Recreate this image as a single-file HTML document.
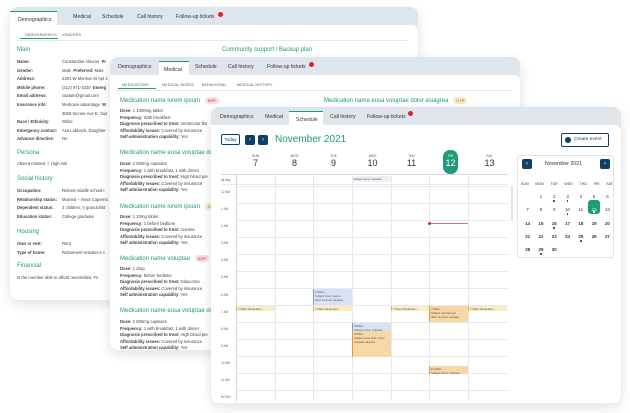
<!DOCTYPE html>
<html><head><meta charset="utf-8"><style>
*{margin:0;padding:0;box-sizing:border-box}
body{width:630px;height:413px;background:#fff;position:relative;overflow:hidden;font-family:"Liberation Sans",sans-serif;color:#333}
.a{position:absolute;white-space:nowrap}
.win{position:absolute;background:#dfe5ec;border-radius:8px;box-shadow:0 4px 12px rgba(0,0,0,.12)}
.body{position:absolute;background:#fff;border-radius:0 6px 0 0}
.tab{position:absolute;font-size:5.2px;color:#333;top:7px}
.act{background:#fff;border-top:1.5px solid #1c9a7a;height:14px;top:4px!important;padding-top:5px}
.badge{position:absolute;width:5px;height:5px;border-radius:50%;background:#d9232d}
.sub{font-size:3.6px;color:#555;letter-spacing:.2px}
.h{color:#1f9a7a;font-size:6px}
.s{font-size:4.2px;color:#444}
.b{font-weight:bold}
.tag{display:inline-block;font-size:4px;padding:1px 3px;border-radius:4px;margin-left:5px;vertical-align:middle}
.bsp{background:#f9dbe0;color:#c03a4a}
.ctp{background:#f7ebc4;color:#8b6b10}
.vl{position:absolute;width:1px;background:#e6e9ee}
.hl{position:absolute;height:1px;background:#e6e9ee}
.hr{font-size:3.2px;color:#666}
.ev{position:absolute;font-size:2.8px;color:#555;padding:1px;border-left:1px solid}
.y{background:#fbecc6;border-color:#e6b24a}
.o{background:#f7d7a6;border-color:#e39a3a}
.bl{background:#d9e2f2;border-color:#7f97c4}
.nav{position:absolute;width:10px;height:10px;background:#0f3f63;border-radius:2px;color:#fff;font-size:6px;text-align:center;line-height:10px}
.dot{position:absolute;width:1.5px;height:1.5px;border-radius:50%;background:#0f3f63}
</style></head><body>

<!-- Window 1 -->
<div class="win" style="left:10px;top:7px;width:408px;height:293px">
 <div class="tab act" style="left:0;padding-left:8px;width:47px;border-radius:0">Demographics</div>
 <div class="tab" style="left:63px">Medical</div>
 <div class="tab" style="left:92px">Schedule</div>
 <div class="tab" style="left:127px">Call history</div>
 <div class="tab" style="left:166px">Follow-up tickets</div>
 <div class="badge" style="left:208px;top:5px"></div>
 <div class="body" style="left:0;top:18px;width:408px;height:275px;border-radius:0 6px 8px 8px"></div>
</div>
<div class="a sub" style="left:25px;top:33px">DEMOGRAPHICS</div>
<div class="a" style="left:20px;top:38px;width:38px;height:1px;background:#1f9a7a"></div>
<div class="a sub" style="left:62px;top:33px">VENDORS</div>
<div class="a" style="left:17px;top:40px;width:390px;height:1px;background:#e6e9ee"></div>
<div class="a h" style="left:17px;top:47px">Main</div>
<div class="a h" style="left:222px;top:47px">Community support / Backup plan</div>
<div class="a s b" style="left:17px;top:58px;line-height:8.6px">Name:<br>Gender:<br>Address:<br>Mobile phone:<br>Email address:<br>Insurance info:<br><br>Race / Ethnicity:<br>Emergency contact:<br>Advance directive:</div>
<div class="a s" style="left:62px;top:58px;line-height:8.6px">Constantine Alavros &nbsp;<b>Pr</b><br>Male &nbsp;<b>Preferred:</b> Male<br>2301 W Monroe St Apt 1<br>(312) 671-3330 &nbsp;<b>Emerg</b><br>caalam@gmail.com<br>Medicare advantage &nbsp;<b>M</b><br>3829 Secure Ave E, Suit<br>White<br>Ava Lubbock, Daughter<br>No</div>
<div class="a h" style="left:17px;top:150px">Persona</div>
<div class="a s" style="left:17px;top:161px">Absent-minded &nbsp;|&nbsp; High risk</div>
<div class="a h" style="left:17px;top:176px">Social history</div>
<div class="a s b" style="left:17px;top:187px;line-height:8.7px">Occupation:<br>Relationship status:<br>Dependent status:<br>Education status:</div>
<div class="a s" style="left:62px;top:187px;line-height:8.7px">Retired middle school t<br>Married – Nova Capernic<br>2 children, 4 grandchild<br>College graduate</div>
<div class="a h" style="left:17px;top:229px">Housing</div>
<div class="a s b" style="left:17px;top:240px;line-height:8.7px">Own or rent:<br>Type of home:</div>
<div class="a s" style="left:62px;top:240px;line-height:8.7px">Rent<br>Retirement residence c</div>
<div class="a h" style="left:17px;top:263px">Financial</div>
<div class="a s" style="left:17px;top:275px">Is the member able to afford necessities: Fo</div>

<!-- Window 2 -->
<div class="win" style="left:110px;top:57px;width:410px;height:293px">
 <div class="tab" style="left:8px">Demographics</div>
 <div class="tab act" style="left:49px;width:30px;padding-left:5px">Medical</div>
 <div class="tab" style="left:85px">Schedule</div>
 <div class="tab" style="left:118px">Call history</div>
 <div class="tab" style="left:157px">Follow-up tickets</div>
 <div class="badge" style="left:199px;top:5px"></div>
 <div class="body" style="left:0;top:18px;width:410px;height:275px;border-radius:0 6px 8px 8px"></div>
</div>
<div class="a sub" style="left:122px;top:83px">MEDICATIONS</div>
<div class="a" style="left:118px;top:88px;width:38px;height:1px;background:#1f9a7a"></div>
<div class="a sub" style="left:162px;top:83px">MEDICAL NEEDS</div>
<div class="a sub" style="left:202px;top:83px">BEHAVIORAL</div>
<div class="a sub" style="left:237px;top:83px">MEDICAL HISTORY</div>
<div class="a" style="left:117px;top:90px;width:395px;height:1px;background:#e6e9ee"></div>
<div class="a h" style="left:120px;top:97px">Medication name lorem ipsum<span class="tag bsp">BSP</span></div>
<div class="a h" style="left:324px;top:97px">Medication name eusa voluptae dolor asiagrea<span class="tag ctp">CTP</span></div>
<div class="a s" style="left:120px;top:108px;line-height:6.6px"><b>Dose:</b> 1 1000mg tablet<br><b>Frequency:</b> With breakfast<br><b>Diagnosis prescribed to treat:</b> Ventricular fibr<br><b>Affordability issues:</b> Covered by insurance<br><b>Self-administration capability:</b> Yes</div>
<div class="a h" style="left:120px;top:150px">Medication name eusa voluptae do</div>
<div class="a s" style="left:120px;top:161px;line-height:6.6px"><b>Dose:</b> 2 500mg capsules<br><b>Frequency:</b> 1 with breakfast, 1 with dinner<br><b>Diagnosis prescribed to treat:</b> High blood pre<br><b>Affordability issues:</b> Covered by insurance<br><b>Self administration capability:</b> Yes</div>
<div class="a h" style="left:120px;top:203px">Medication name lorem ipsum<span class="tag ctp">CTP</span></div>
<div class="a s" style="left:120px;top:214px;line-height:6.6px"><b>Dose:</b> 1 10mg tablet<br><b>Frequency:</b> 1 before bedtime<br><b>Diagnosis prescribed to treat:</b> Anemia<br><b>Affordability issues:</b> Covered by insurance<br><b>Self administration capability:</b> Yes</div>
<div class="a h" style="left:120px;top:255px">Medication name voluptae<span class="tag bsp">BSP</span></div>
<div class="a s" style="left:120px;top:266px;line-height:6.6px"><b>Dose:</b> 1 drop<br><b>Frequency:</b> before bedtime<br><b>Diagnosis prescribed to treat:</b> Glaucoma<br><b>Affordability issues:</b> Covered by insurance<br><b>Self administration capability:</b> Yes</div>
<div class="a h" style="left:120px;top:308px">Medication name eusa voluptae do</div>
<div class="a s" style="left:120px;top:319px;line-height:6.6px"><b>Dose:</b> 2 500mg capsules<br><b>Frequency:</b> 1 with breakfast, 1 with dinner<br><b>Diagnosis prescribed to treat:</b> High blood pre<br><b>Affordability issues:</b> Covered by insurance<br><b>Self administration capability:</b> Yes</div>

<!-- Window 3 -->
<div class="win" style="left:211px;top:107px;width:410px;height:296px">
 <div class="tab" style="left:9px">Demographics</div>
 <div class="tab" style="left:54px">Medical</div>
 <div class="tab act" style="left:78px;width:34px;padding-left:7px">Schedule</div>
 <div class="tab" style="left:119px">Call history</div>
 <div class="tab" style="left:156px">Follow-up tickets</div>
 <div class="badge" style="left:197px;top:4px"></div>
 <div class="body" style="left:0;top:18px;width:410px;height:278px;border-radius:0 6px 8px 8px"></div>
</div>
<div class="a" style="left:221px;top:134px;width:19px;height:11px;border:1px solid #0f3f63;border-radius:2px;font-size:4.5px;text-align:center;line-height:9px;color:#0f3f63">Today</div>
<div class="nav" style="left:245px;top:135px">‹</div>
<div class="nav" style="left:258px;top:135px">›</div>
<div class="a" style="left:275px;top:134px;font-size:10px;color:#1f9a7a">November 2021</div>
<div class="a" style="left:561px;top:133px;width:48px;height:14px;border:1px solid #0f3f63;border-radius:2px;font-size:4.8px;line-height:12px;color:#0f3f63;padding-left:12px">Create event</div>
<div class="a" style="left:565px;top:137px;width:6px;height:6px;border-radius:50%;background:#0f3f63"></div>

<!-- day headers -->
<div class="a" style="left:236px;top:154px;width:273px;font-size:3.3px;color:#555;display:flex">
 <span style="width:39px;text-align:center">SUN<br><span style="font-size:9px;color:#333">7</span></span>
 <span style="width:39px;text-align:center">MON<br><span style="font-size:9px;color:#333">8</span></span>
 <span style="width:39px;text-align:center">TUE<br><span style="font-size:9px;color:#333">9</span></span>
 <span style="width:39px;text-align:center">WED<br><span style="font-size:9px;color:#333">10</span></span>
 <span style="width:39px;text-align:center">THU<br><span style="font-size:9px;color:#333">11</span></span>
 <span style="width:39px;text-align:center;position:relative"><span style="position:absolute;left:12px;top:-4px;width:15px;height:24px;border-radius:7px;background:#1f9a7a"></span><span style="position:relative;color:#fff">FRI<br><span style="font-size:9px">12</span></span></span>
 <span style="width:39px;text-align:center">SAT<br><span style="font-size:9px;color:#333">13</span></span>
</div>
<div class="hl" style="left:221px;top:174px;width:287px;background:#d5dae1"></div>
<div class="a hr" style="left:221px;top:178px">all-day</div>
<div class="ev" style="left:352px;top:176px;width:39px;height:6px;background:#eceff3;border:none">Subject lorem voluptae</div>
<div class="hl" style="left:221px;top:184px;width:287px"></div>

<!-- hours -->
<div class="a hr" style="left:221px;top:184px;line-height:17.1px">12 AM<br>1 AM<br>2 AM<br>3 AM<br>4 AM<br>5 AM<br>6 AM<br>7 AM<br>8 AM<br>9 AM<br>10 AM<br>11 AM<br>NOON</div>
<div class="hl" style="left:236px;top:186px;width:272px"></div>
<div class="hl" style="left:236px;top:203px;width:272px"></div>
<div class="hl" style="left:236px;top:220px;width:272px"></div>
<div class="hl" style="left:236px;top:237px;width:272px"></div>
<div class="hl" style="left:236px;top:254px;width:272px"></div>
<div class="hl" style="left:236px;top:271px;width:272px"></div>
<div class="hl" style="left:236px;top:288px;width:272px"></div>
<div class="hl" style="left:236px;top:305px;width:272px"></div>
<div class="hl" style="left:236px;top:322px;width:272px"></div>
<div class="hl" style="left:236px;top:339px;width:272px"></div>
<div class="hl" style="left:236px;top:356px;width:272px"></div>
<div class="hl" style="left:236px;top:373px;width:272px"></div>
<div class="hl" style="left:236px;top:390px;width:272px"></div>
<div class="vl" style="left:236px;top:174px;height:227px;background:#d5dae1"></div>
<div class="vl" style="left:275px;top:174px;height:227px"></div>
<div class="vl" style="left:313px;top:174px;height:227px"></div>
<div class="vl" style="left:352px;top:174px;height:227px"></div>
<div class="vl" style="left:391px;top:174px;height:227px"></div>
<div class="vl" style="left:429px;top:174px;height:227px"></div>
<div class="vl" style="left:468px;top:174px;height:227px"></div>
<div class="a" style="left:511px;top:186px;width:1.5px;height:35px;background:#dfe3e8"></div>
<div class="a" style="left:429px;top:223px;width:39px;height:1px;background:#e06a78"></div>
<div class="a" style="left:428px;top:222px;width:3px;height:3px;border-radius:50%;background:#c8283a"></div>

<!-- events -->
<div class="ev bl" style="left:313px;top:289px;width:39px;height:16px">6:00am<br>Subject lorem ipsum<br>dolor sit amet voluptae</div>
<div class="ev y" style="left:236px;top:306px;width:39px;height:5px">7:00am Medication</div>
<div class="ev y" style="left:313px;top:306px;width:39px;height:5px">7:00am Medication</div>
<div class="ev y" style="left:391px;top:306px;width:38px;height:5px">7:00am Medication</div>
<div class="ev o" style="left:429px;top:306px;width:39px;height:16px">7:00am<br>Subject nsectetuyen<br>dolor sit amet voluptae</div>
<div class="ev y" style="left:468px;top:306px;width:39px;height:5px">7:00am Medication</div>
<div class="ev bl" style="left:352px;top:323px;width:39px;height:8px">8:00am<br>Subject lorem voluptae</div>
<div class="ev o" style="left:352px;top:331px;width:39px;height:26px">8:30am<br>Subject eusa dolor lorem<br>voluptae aliquam</div>
<div class="ev o" style="left:429px;top:366px;width:39px;height:8px">10:30am<br>Subject lorem voluptae</div>

<!-- mini calendar -->
<div class="a" style="left:517px;top:155px;width:97px;height:103px;border:1px solid #dfe3e8;border-radius:3px"></div>
<div class="nav" style="left:522px;top:159px">‹</div>
<div class="nav" style="left:600px;top:159px">›</div>
<div class="a" style="left:545px;top:161px;font-size:5.2px;color:#333">November 2021</div>
<div class="a" style="left:588px;top:200px;width:12px;height:14px;border-radius:3px;background:#1f9a7a"></div>
<div class="a" style="left:521px;top:178px;font-size:3.6px;color:#333;line-height:13.3px;width:92px">
<div style="display:flex;justify-content:space-between"><span>SUN</span><span>MON</span><span>TUE</span><span>WED</span><span>THU</span><span>FRI</span><span>SAT</span></div>
</div>
<div class="a" style="left:521px;top:190px;font-size:4.4px;color:#333;line-height:13.3px">
<div style="display:grid;grid-template-columns:repeat(7,13.3px);text-align:center">
<span></span><span>1</span><span>2</span><span>3</span><span>4</span><span>5</span><span>6</span>
<span>7</span><span>8</span><span>9</span><span>10</span><span>11</span><span style="color:#fff">12</span><span>13</span>
<b>14</b><b>15</b><b>16</b><b>17</b><b>18</b><b>19</b><b>20</b>
<b>21</b><b>22</b><b>23</b><b>24</b><b>25</b><b>26</b><b>27</b>
<b>28</b><b>29</b><b>30</b>
</div></div>
<div class="dot" style="left:553px;top:200px"></div>
<div class="dot" style="left:566.5px;top:200px"></div>
<div class="dot" style="left:566.5px;top:213px"></div>
<div class="dot" style="left:593px;top:211px;background:#fff"></div>
<div class="dot" style="left:553px;top:227px"></div>
<div class="dot" style="left:580px;top:240px"></div>
<div class="dot" style="left:540px;top:253px"></div>
</body></html>
